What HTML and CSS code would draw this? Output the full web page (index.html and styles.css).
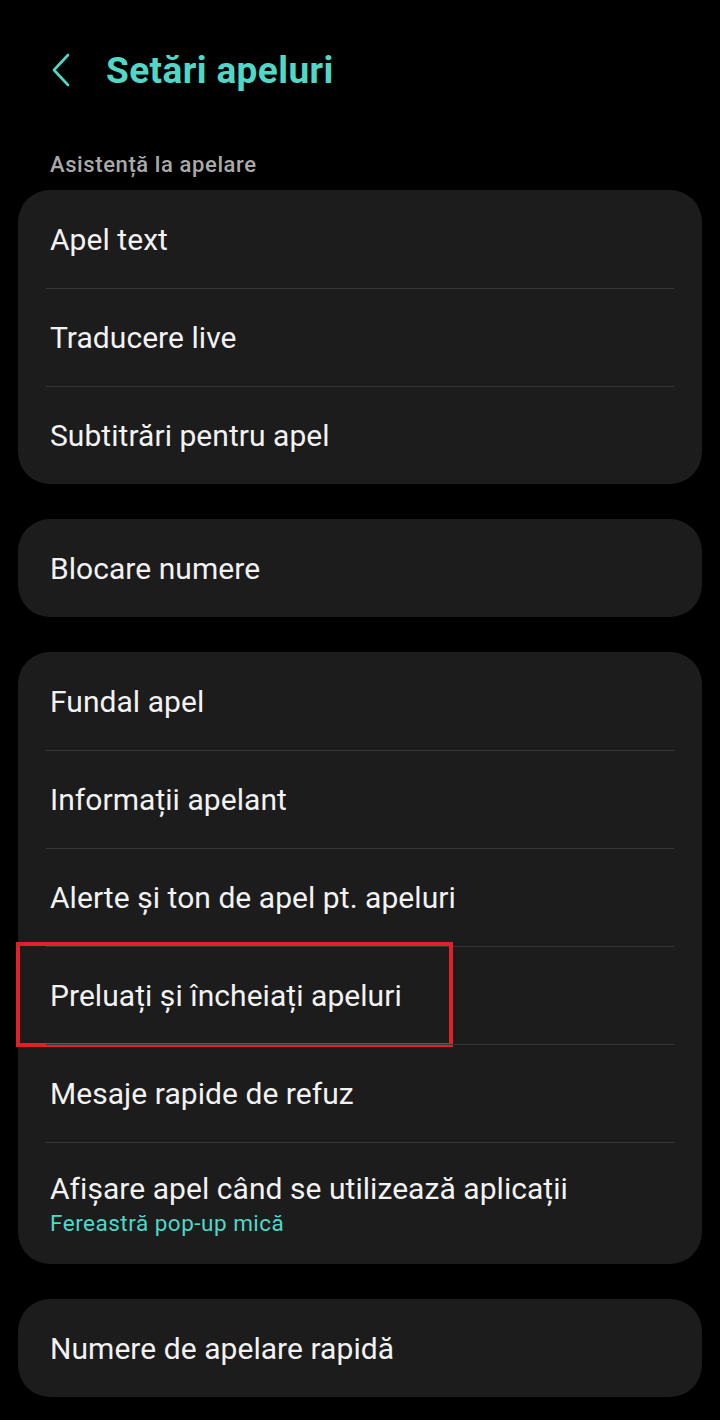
FILE: index.html
```html
<!DOCTYPE html>
<html lang="ro">
<head>
<meta charset="utf-8">
<title>Setări apeluri</title>
<link rel="stylesheet" href="styles.css">
</head>
<body>
<div class="screen">
  <header class="topbar">
    <svg class="back" width="20" height="34" viewBox="0 0 20 34"><path d="M17 2 L3 17 L17 32" fill="none" stroke="#4fd8c8" stroke-width="2.6" stroke-linecap="round" stroke-linejoin="round"/></svg>
    <h1 class="title">Setări apeluri</h1>
  </header>

  <div class="section-label">Asistență la apelare</div>
  <div class="card">
    <div class="row">Apel text</div>
    <div class="row">Traducere live</div>
    <div class="row">Subtitrări pentru apel</div>
  </div>

  <div class="card">
    <div class="row">Blocare numere</div>
  </div>

  <div class="card">
    <div class="row">Fundal apel</div>
    <div class="row">Informații apelant</div>
    <div class="row">Alerte și ton de apel pt. apeluri</div>
    <div class="row highlighted">Preluați și încheiați apeluri<span class="mark"></span></div>
    <div class="row">Mesaje rapide de refuz</div>
    <div class="row tall">
      <div>Afișare apel când se utilizează aplicații</div>
      <div class="sub">Fereastră pop-up mică</div>
    </div>
  </div>

  <div class="card">
    <div class="row">Numere de apelare rapidă</div>
  </div>
</div>
</body>
</html>
```

FILE: styles.css
```css
html, body {
  margin: 0;
  padding: 0;
  background: #000;
}
body {
  font-family: Roboto, "Noto Sans", sans-serif;
  color: #f2f2f2;
}
.screen {
  width: 720px;
  height: 1420px;
  padding: 0 18px;
  box-sizing: border-box;
  overflow: hidden;
}
.topbar {
  height: 140px;
  display: flex;
  align-items: center;
  padding-left: 33px;
  gap: 35px;
}
.back {
  display: block;
}
.title {
  margin: 0;
  font-size: 37px;
  font-weight: 700;
  color: #4fd8c8;
  letter-spacing: 0.4px;
}
.section-label {
  font-size: 22px;
  font-weight: 500;
  color: #a9a9a9;
  padding-left: 32px;
  height: 50px;
  line-height: 50px;
  letter-spacing: 0.6px;
}
.card {
  background: #1c1c1c;
  border-radius: 32px;
  margin-bottom: 35px;
  padding: 0 28px;
}
.row {
  position: relative;
  height: 98px;
  display: flex;
  align-items: center;
  padding-left: 4px;
  font-size: 30px;
  letter-spacing: 0.05px;
  border-top: 1px solid #363636;
  box-sizing: border-box;
}
.row:first-child {
  border-top: none;
}
.row.tall {
  height: 122px;
  flex-direction: column;
  align-items: flex-start;
  justify-content: center;
}
.sub {
  font-size: 22.5px;
  letter-spacing: 0.5px;
  color: #4fd8c8;
  margin-top: 4px;
}
.mark {
  position: absolute;
  left: -30px;
  top: -5px;
  width: 437px;
  height: 105px;
  border: 4px solid #e0202a;
  box-sizing: border-box;
  pointer-events: none;
}
```
